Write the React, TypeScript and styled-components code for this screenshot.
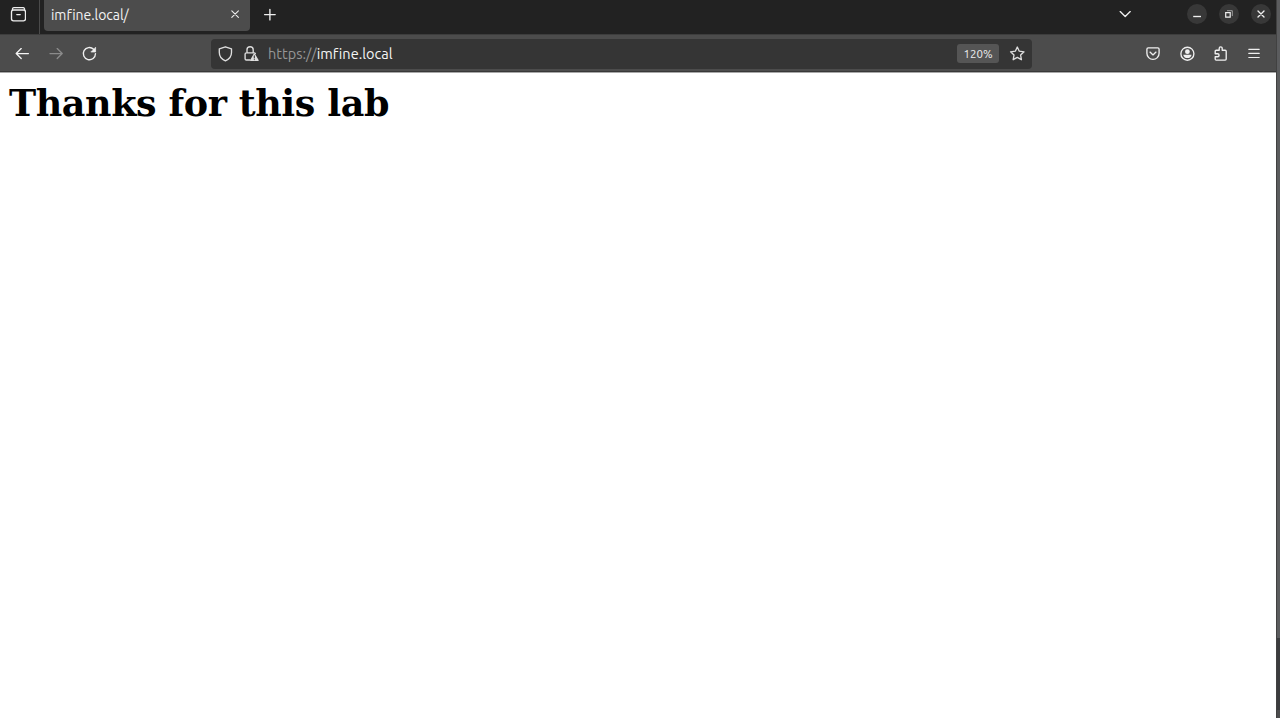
import React from "react";
import styled, { createGlobalStyle } from "styled-components";

const GlobalStyle = createGlobalStyle`
  * { box-sizing: border-box; }
  html, body { margin: 0; padding: 0; background: #fff; overflow: hidden; }
`;

const Desktop = styled.div`
  display: flex;
  width: 100vw;
  height: 100vh;
  font-family: Ubuntu, "Noto Sans", "Open Sans", sans-serif;
  font-variant-ligatures: none;
`;

const BrowserWindow = styled.div`
  display: flex;
  flex-direction: column;
  flex: 1;
  min-width: 0;
  background: #fff;
`;

const DesktopEdge = styled.div`
  display: flex;
  flex-direction: column;
  width: 4px;
  border-left: 1px solid #414141;
  background: #5b5c5e;
`;

const EdgeTop = styled.div`
  flex: 1;
`;

const EdgeBottom = styled.div`
  height: 80px;
  background: #3b3c3e;
  border-bottom: 8px solid #4c4c4d;
`;

const TabStrip = styled.div`
  display: flex;
  height: 34px;
  background: #222222;
`;

const FirefoxView = styled.div`
  display: flex;
  width: 40px;
  padding: 6px 0 0 10px;
  border-right: 1px solid #4a4a4a;
`;

const Tab = styled.div`
  display: flex;
  justify-content: space-between;
  width: 206px;
  height: 30.5px;
  margin-left: 4px;
  padding: 0 7px;
  border-radius: 0 0 4px 4px;
  background: #4c4c4c;
  color: #f3f3f3;
`;

const TabTitle = styled.span`
  font-size: 14px;
  line-height: 19px;
  padding-top: 6px;
  letter-spacing: -0.05px;
`;

const Icon = styled.svg<{ $size?: number; $color?: string }>`
  display: block;
  flex: none;
  width: ${(p) => p.$size ?? 16}px;
  height: ${(p) => p.$size ?? 16}px;
  fill: none;
  stroke: ${(p) => p.$color ?? "#efefef"};
  stroke-width: 1.35;
  stroke-linecap: round;
  stroke-linejoin: round;
`;

const TabClose = styled.span`
  padding-top: 6px;
`;

const NewTab = styled.span`
  padding: 6px 0 0 12px;
`;

const WindowControls = styled.div`
  display: flex;
  margin-left: auto;
  padding: 4px 5.5px 0 0;
`;

const ListTabs = styled.span`
  padding-top: 2px;
  margin-right: 54px;
`;

const ControlButton = styled.span<{ $gap?: number }>`
  display: grid;
  place-items: center;
  width: 20px;
  height: 20px;
  margin-right: ${(p) => p.$gap ?? 0}px;
  border-radius: 50%;
  background: #383838;
`;

const NavBar = styled.div`
  display: flex;
  align-items: center;
  height: 38px;
  padding: 1px 14px 0;
  border-top: 1px solid #3d3d3d;
  border-bottom: 1px solid #383838;
  background: #4c4c4c;
`;

const NavButtons = styled.div`
  display: flex;
  gap: 17.5px;
  width: 197px;
`;

const AddressBar = styled.div`
  display: flex;
  align-items: center;
  width: 821px;
  height: 30px;
  padding: 0 7px 0 6px;
  border-radius: 4px;
  background: #353535;
`;

const Identity = styled.div`
  display: flex;
  gap: 10px;
  width: 51px;
`;

const Url = styled.span`
  flex: 1;
  color: #f6f6f6;
  font-size: 14.5px;
  line-height: 20px;
  letter-spacing: 0;
`;

const Scheme = styled.span`
  color: #969696;
`;

const ZoomBadge = styled.span`
  width: 42px;
  height: 19px;
  margin-right: 10px;
  border-radius: 3px;
  background: #555555;
  color: #eeeeee;
  font-size: 11.5px;
  line-height: 19px;
  text-align: center;
`;

const Toolbar = styled.div`
  display: flex;
  gap: 17.6px;
  margin-left: auto;
`;

const Page = styled.main`
  flex: 1;
  padding: 8px 9px;
  border-top: 1px solid #a8a8a8;
`;

const Heading = styled.h1`
  margin: 0;
  color: #000;
  font: bold 36.5px/46px "DejaVu Serif", serif;
  letter-spacing: -0.42px;
`;

export default function App() {
  return (
    <>
      <GlobalStyle />
      <Desktop>
        <BrowserWindow>
          <TabStrip>
            <FirefoxView>
              <Icon viewBox="0 0 16 16">
                <path d="M3.8 1.6h9.2M3.5 4h10a2 2 0 0 1 2 2v6.8a2 2 0 0 1-2 2h-10a2 2 0 0 1-2-2V6a2 2 0 0 1 2-2ZM6.8 8.6h3.4M2.4 3.2c.2-1 .7-1.6 1.4-1.6M14.6 3.2c-.2-1-.7-1.6-1.4-1.6" />
              </Icon>
            </FirefoxView>
            <Tab>
              <TabTitle>imfine.local/</TabTitle>
              <TabClose>
                <Icon viewBox="0 0 16 16">
                  <path d="m4.8 4.8 6.6 6.6m0-6.6-6.6 6.6" strokeWidth="1.1" />
                </Icon>
              </TabClose>
            </Tab>
            <NewTab>
              <Icon viewBox="0 0 16 16">
                <path d="M2.6 8.6h10.6M7.9 3.3v10.6" />
              </Icon>
            </NewTab>
            <WindowControls>
              <ListTabs>
                <Icon viewBox="0 0 16 16">
                  <path d="m3.2 5.6 5 5 5-5" />
                </Icon>
              </ListTabs>
              <ControlButton $gap={12}>
                <Icon $size={12} viewBox="0 0 12 12">
                  <path d="M2.2 8.5h7.8" strokeLinecap="butt" />
                </Icon>
              </ControlButton>
              <ControlButton $gap={12}>
                <Icon $size={12} viewBox="0 0 12 12">
                  <path d="M2.7 4.7h4.5v4.5H2.7z" strokeLinejoin="miter" strokeWidth="1.2" />
                  <path d="M4.4 2.7h4.9v5" strokeLinejoin="miter" strokeWidth=".9" stroke="#aaaaaa" />
                </Icon>
              </ControlButton>
              <ControlButton>
                <Icon $size={12} viewBox="0 0 12 12">
                  <path d="m3 3 6 6m0-6L3 9" />
                </Icon>
              </ControlButton>
            </WindowControls>
          </TabStrip>
          <NavBar>
            <NavButtons>
              <Icon viewBox="0 0 16 16" $color="#f4f4f4">
                <path d="M14.4 7.6H2.2m5-5-5 5 5 5" />
              </Icon>
              <Icon viewBox="0 0 16 16" $color="#8b8b8b">
                <path d="M2 7.6h12.2m-5-5 5 5-5 5" />
              </Icon>
              <Icon viewBox="0 0 16 16">
                <path d="M12.6 3.2A6.1 6.1 0 1 0 14.5 7.6" />
                <path d="M14.6 1.6v4.4H10.2z" fill="#efefef" strokeWidth=".7" />
              </Icon>
            </NavButtons>
            <AddressBar>
              <Identity>
                <Icon viewBox="0 0 16 16" $color="#dedede">
                  <path d="M8.4.8 14.5 2.8v3.7c0 3.7-2.2 6.7-6.1 8.3C4.5 13.2 2.3 10.2 2.3 6.5V2.8Z" />
                </Icon>
                <Icon viewBox="0 0 16 16" $color="#dedede">
                  <path d="M7 14H3.4a1.3 1.3 0 0 1-1.3-1.3V8.1a1.3 1.3 0 0 1 1.3-1.3h7.7c.6 0 1 .3 1.2.8M4 6.6V3.8a3.1 3.1 0 0 1 6.2 0v2.8" />
                  <path d="M11.3 8.1 15 14.4H7.8Z" fill="#dedede" />
                  <path d="M11.3 9.8V12m0 1.5v.1" stroke="#353535" strokeWidth="1.1" />
                </Icon>
              </Identity>
              <Url>
                <Scheme>https://</Scheme>imfine.local
              </Url>
              <ZoomBadge>120%</ZoomBadge>
              <Icon viewBox="0 0 16 16" $color="#dedede">
                <path d="m8.3 1 2 4.2 4.7.6L11.6 9l.8 4.7-4.1-2.3-4.1 2.3L5 9 1.6 5.8l4.7-.6Z" />
              </Icon>
            </AddressBar>
            <Toolbar>
              <Icon viewBox="0 0 16 16">
                <path d="M3.2 1.9h9.6c.8 0 1.3.5 1.3 1.3v4.1a6.1 6.1 0 0 1-12.2 0V3.2c0-.8.5-1.3 1.3-1.3ZM5 6.1l3 2.8 3-2.8" />
              </Icon>
              <Icon viewBox="0 0 16 16">
                <circle cx="8.4" cy="7.7" r="6.5" />
                <circle cx="8.4" cy="5.7" r="2.4" fill="#efefef" stroke="none" />
                <path d="M4.3 8.7h8.2c0 2-1.9 3.4-4.1 3.4S4.3 10.7 4.3 8.7Z" fill="#efefef" stroke="none" />
              </Icon>
              <Icon viewBox="0 0 16 16">
                <path d="M3.2 6.6V5.2a1 1 0 0 1 1-1h3V2.4a1.5 1.5 0 0 1 3 0v1.8h3a1 1 0 0 1 1 1v7.9a1 1 0 0 1-1 1h-9a1 1 0 0 1-1-1v-2.4h2.4a1.5 1.5 0 0 0 0-3H3.2Z" />
              </Icon>
              <Icon viewBox="0 0 16 16">
                <path d="M2.8 3.3h10.4M2.8 7.4h10.4M2.8 11.5h10.4" strokeWidth="1.2" />
              </Icon>
            </Toolbar>
          </NavBar>
          <Page>
            <Heading>Thanks for this lab</Heading>
          </Page>
        </BrowserWindow>
        <DesktopEdge>
          <EdgeTop />
          <EdgeBottom />
        </DesktopEdge>
      </Desktop>
    </>
  );
}
